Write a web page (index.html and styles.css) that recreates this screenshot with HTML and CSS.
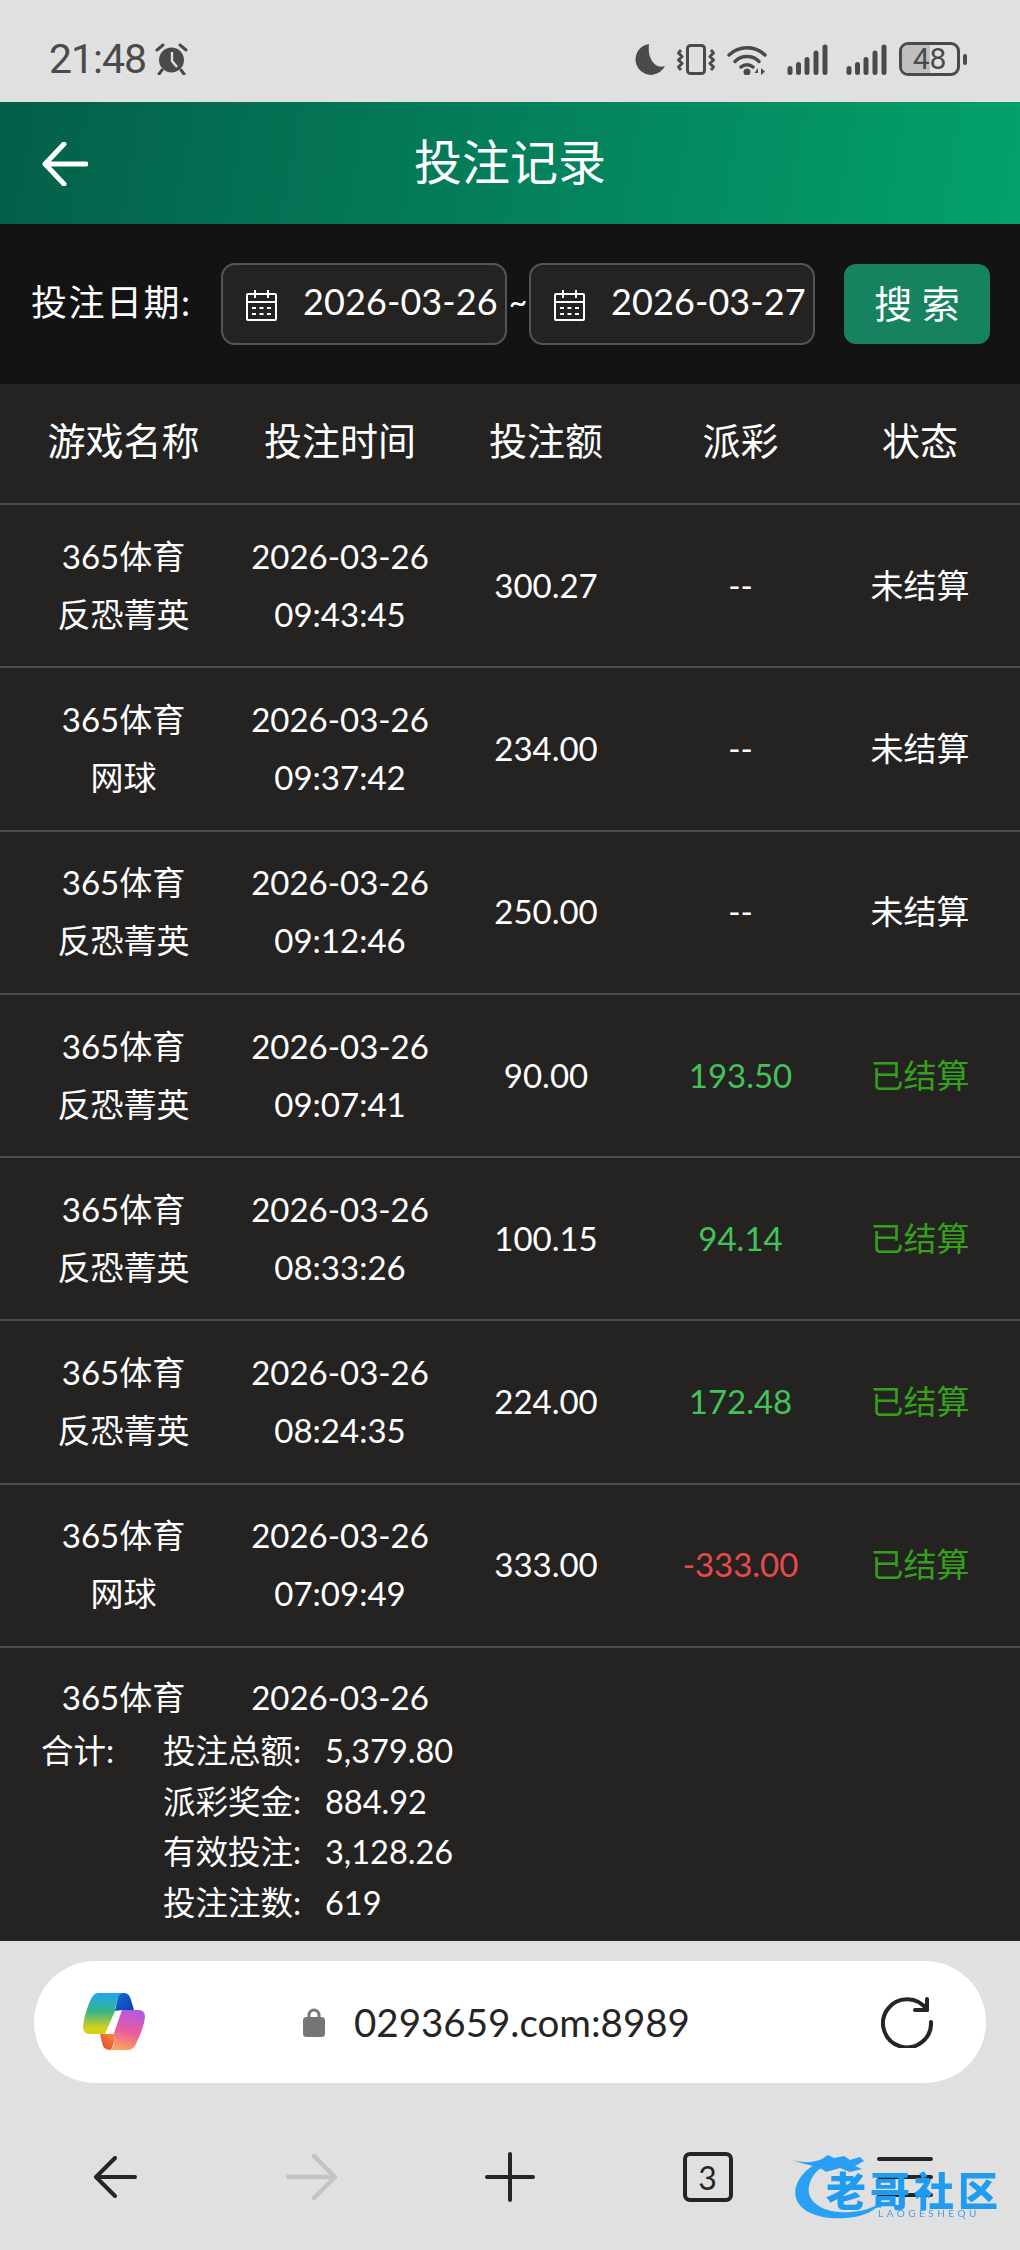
FILE: index.html
```html
<!DOCTYPE html>
<html>
<head>
    <meta charset="UTF-8">
    <meta name="viewport" content="width=device-width, initial-scale=1.0">
    <title>投注记录</title>
    <link rel="stylesheet" href="styles.css">
</head>
<body>
    <div class="status-bar">
        <div class="status-left">
            <span class="clock">21:48</span>
            <svg class="ico-alarm" viewBox="0 0 33 32" width="33" height="32">
                <circle cx="16.5" cy="17" r="12.5" fill="#4a4a4a"/>
                <path d="M17 9v9l5 6" fill="none" stroke="#e0e0e0" stroke-width="2.4"/>
                <path d="M2 7 8 2M31 7l-6-5M7 27l-3 4M26 27l3 4" stroke="#4a4a4a" stroke-width="3" stroke-linecap="round" fill="none"/>
            </svg>
        </div>
        <div class="status-right">
            <svg viewBox="0 0 30 31" width="30" height="31"><path d="M14 0A15.500 15.500 0 1 0 30 22C20 26 12 14 14 0Z" fill="#4a4a4a"/></svg>
            <svg class="gap-12" viewBox="0 0 38 31" width="38" height="31">
                <rect x="10.500" y="1.500" width="17" height="28" rx="3" fill="none" stroke="#4a4a4a" stroke-width="3"/>
                <path d="M4 6 1.500 9 5 12.500 1.500 16 5 19.500 1.500 23 4 26M34 6l2.500 3L33 12.500l3.500 3.500L33 19.500l3.500 3.500L34 26" fill="none" stroke="#4a4a4a" stroke-width="2.800"/>
            </svg>
            <svg class="gap-12" viewBox="0 0 41 31" width="41" height="31">
                <path d="M2 11a26 26 0 0 1 36 0M8 17.500a17 17 0 0 1 24 0M14 23a9 9 0 0 1 12 0" fill="none" stroke="#4a4a4a" stroke-width="3.400" stroke-linecap="round"/>
                <circle cx="20" cy="28" r="3.500" fill="#4a4a4a"/>
                <path d="M31 31v-7l-3.500 5h3.500ZM34 24v7l4-3.500Z" fill="#4a4a4a"/>
            </svg>
            <svg class="gap-19" viewBox="0 0 41 31" width="41" height="31">
                <g stroke="#4a4a4a" stroke-width="5" stroke-linecap="round"><path d="M3 24.500v4M11.500 20.500v8M20 15.500v13M29 9v19.500M38 3v25.500"/></g>
            </svg>
            <svg class="gap-18" viewBox="0 0 41 31" width="41" height="31">
                <g stroke="#4a4a4a" stroke-width="5" stroke-linecap="round"><path d="M3 24.500v4M11.500 20.500v8M20 15.500v13M29 9v19.500M38 3v25.500"/></g>
            </svg>
            <div class="battery"><span class="battery-fill"></span><span class="battery-num">48</span></div>
            <span class="battery-cap"></span>
        </div>
    </div>

    <div class="app-header">
        <svg class="header-back" viewBox="0 0 46 44" width="46" height="44">
            <path d="M44 22H4M22 2 3 22l19 20" fill="none" stroke="#fff" stroke-width="5" stroke-linecap="round" stroke-linejoin="round"/>
        </svg>
        <span>投注记录</span>
    </div>

    <div class="search-bar">
        <span class="search-label">投注日期:</span>
        <div class="date-box">
            <svg class="ico-cal" viewBox="0 0 33 33" width="33" height="33">
                <path d="M3 6h27a1 1 0 0 1 1 1v24a1 1 0 0 1-1 1H3a1 1 0 0 1-1-1V7a1 1 0 0 1 1-1ZM2 14h29M10 2v8M23 2v8M7 20h4M14.500 20h4M22 20h4M7 26h4M14.500 26h4M22 26h4" fill="none" stroke="#fff" stroke-width="2"/>
            </svg>
            <span class="date-text">2026-03-26</span>
        </div>
        <span class="tilde">~</span>
        <div class="date-box">
            <svg class="ico-cal" viewBox="0 0 33 33" width="33" height="33">
                <path d="M3 6h27a1 1 0 0 1 1 1v24a1 1 0 0 1-1 1H3a1 1 0 0 1-1-1V7a1 1 0 0 1 1-1ZM2 14h29M10 2v8M23 2v8M7 20h4M14.500 20h4M22 20h4M7 26h4M14.500 26h4M22 26h4" fill="none" stroke="#fff" stroke-width="2"/>
            </svg>
            <span class="date-text">2026-03-27</span>
        </div>
        <button class="search-btn">搜 索</button>
    </div>

    <div class="main">
        <div class="row row-head">
            <div>游戏名称</div><div>投注时间</div><div>投注额</div><div>派彩</div><div>状态</div>
        </div>
        <div class="row">
            <div>365体育<br>反恐菁英</div><div>2026-03-26<br>09:43:45</div><div>300.27</div><div>--</div><div>未结算</div>
        </div>
        <div class="row">
            <div>365体育<br>网球</div><div>2026-03-26<br>09:37:42</div><div>234.00</div><div>--</div><div>未结算</div>
        </div>
        <div class="row">
            <div>365体育<br>反恐菁英</div><div>2026-03-26<br>09:12:46</div><div>250.00</div><div>--</div><div>未结算</div>
        </div>
        <div class="row">
            <div>365体育<br>反恐菁英</div><div>2026-03-26<br>09:07:41</div><div>90.00</div><div class="win">193.50</div><div class="done">已结算</div>
        </div>
        <div class="row">
            <div>365体育<br>反恐菁英</div><div>2026-03-26<br>08:33:26</div><div>100.15</div><div class="win">94.14</div><div class="done">已结算</div>
        </div>
        <div class="row">
            <div>365体育<br>反恐菁英</div><div>2026-03-26<br>08:24:35</div><div>224.00</div><div class="win">172.48</div><div class="done">已结算</div>
        </div>
        <div class="row">
            <div>365体育<br>网球</div><div>2026-03-26<br>07:09:49</div><div>333.00</div><div class="lose">-333.00</div><div class="done">已结算</div>
        </div>
        <div class="row row-cut">
            <div>365体育</div><div>2026-03-26</div>
        </div>

        <div class="totals">
            <span class="totals-label">合计:</span>
            <div class="totals-list">
                <div class="totals-item"><span class="totals-name">投注总额:</span><span>5,379.80</span></div>
                <div class="totals-item"><span class="totals-name">派彩奖金:</span><span>884.92</span></div>
                <div class="totals-item"><span class="totals-name">有效投注:</span><span>3,128.26</span></div>
                <div class="totals-item"><span class="totals-name">投注注数:</span><span>619</span></div>
            </div>
        </div>
    </div>

    <div class="browser">
        <div class="url-bar">
            <svg class="ico-copilot" viewBox="0 0 62 58" width="62" height="58">
                <defs>
                    <linearGradient id="cpLeft" x1="0" y1="0" x2="0" y2="1">
                        <stop offset="0" stop-color="#1ea7f0"/>
                        <stop offset=".45" stop-color="#37b58a"/>
                        <stop offset=".85" stop-color="#d6cf1e"/>
                    </linearGradient>
                    <linearGradient id="cpRight" x1="0.500" y1="0" x2="0.300" y2="1">
                        <stop offset="0" stop-color="#b45be0"/>
                        <stop offset=".5" stop-color="#e85aa0"/>
                        <stop offset="1" stop-color="#fba45c"/>
                    </linearGradient>
                    <linearGradient id="cpTop" x1="0" y1="0" x2="1" y2="1">
                        <stop offset="0" stop-color="#1668d8"/>
                        <stop offset="1" stop-color="#0d3fb0"/>
                    </linearGradient>
                    <linearGradient id="cpBottom" x1="1" y1="0" x2="0" y2="1">
                        <stop offset="0" stop-color="#f98a40"/>
                        <stop offset="1" stop-color="#e0452f"/>
                    </linearGradient>
                </defs>
                <path d="M36 0H41C45 0 47 3 48 7L51 17H39L32 18 34 8Z" fill="url(#cpTop)"/>
                <path d="M17 41H32C31 49 30 56 27 57 22 57 20 54 19 50Z" fill="url(#cpBottom)"/>
                <path d="M15 0H40C35 1 33.500 8 32 18L22 41H6C2 41 0 38 0 34 1 24 5 12 8 6 10 2 12 0 15 0Z" fill="url(#cpLeft)"/>
                <path d="M39 17H56C60 17 62 20 62 24 61 34 56 44 53 51 51 55 48 57 45 57H27C31 56 32 48 31 40Z" fill="url(#cpRight)"/>
            </svg>
            <svg class="ico-lock" viewBox="0 0 22 29" width="22" height="29">
                <path d="M6 10V7a5 5 0 0 1 10 0v3" fill="none" stroke="#757575" stroke-width="3"/>
                <rect y="9" width="22" height="20" rx="3.500" fill="#757575"/>
            </svg>
            <span class="url-text">0293659.com:8989</span>
            <svg class="ico-reload" viewBox="0 0 52 52" width="52" height="52">
                <path d="M46 14A24 24 0 1 0 50 26" fill="none" stroke="#252525" stroke-width="4" stroke-linecap="round"/>
                <path d="M34 14H46V3" fill="none" stroke="#252525" stroke-width="4" stroke-linejoin="round" stroke-linecap="round"/>
            </svg>
        </div>

        <div class="nav">
            <div class="nav-item">
                <svg viewBox="0 0 44 42" width="44" height="42"><path d="M42 21H3M22 2 3 21l19 19" fill="none" stroke="#252525" stroke-width="4" stroke-linecap="round" stroke-linejoin="round"/></svg>
            </div>
            <div class="nav-item">
                <svg viewBox="0 0 52 46" width="52" height="46"><path d="M2 23h47M28 2l21 21-21 21" fill="none" stroke="#c3c3c3" stroke-width="4.500" stroke-linecap="round" stroke-linejoin="round"/></svg>
            </div>
            <div class="nav-item">
                <svg viewBox="0 0 50 50" width="50" height="50"><path d="M25 2v46M2 25h46" fill="none" stroke="#252525" stroke-width="4" stroke-linecap="round"/></svg>
            </div>
            <div class="nav-item"><span class="tab-count">3</span></div>
            <div class="nav-item">
                <svg viewBox="0 0 56 42" width="56" height="42"><path d="M2 3h52M2 21h52M2 39h52" fill="none" stroke="#252525" stroke-width="4" stroke-linecap="round"/></svg>
            </div>
        </div>

        <div class="watermark">
            <svg class="wm-dragon" viewBox="0 0 110 72" width="110" height="72">
                <path d="M38 8C12 16 0 34 4 48c4 14 24 22 50 20 18-1 30-8 36-16-12 8-26 11-42 10C28 61 14 50 17 36c2-10 10-20 24-24Z" fill="#2aa0f2"/>
                <path d="M0 10c12 3 20 3 30-1l6-4 6 3 10-2 6 4 10-3 4 4-9 5 7 3-12 3-10-4-14 4C28 16 14 15 0 10Z" fill="#2a9df5"/>
            </svg>
            <div class="wm-text">老哥社区</div>
            <div class="wm-sub">LAOGESHEQU</div>
        </div>
    </div>
</body>
</html>
```

FILE: styles.css
```css
body {
    margin: 0;
    width: 1020px;
    height: 2250px;
    overflow: hidden;
    position: relative;
    background-color: #e0e0e0;
    font-family: "Lato", "Noto Sans CJK SC", sans-serif;
    color: #fff;
}
svg {
    display: block;
    flex: none;
}

/* status bar */
.status-bar {
    height: 102px;
    box-sizing: border-box;
    padding: 0 53px 0 49px;
    display: flex;
    align-items: center;
    justify-content: space-between;
    color: #4a4a4a;
}
.status-left {
    display: flex;
    align-items: center;
    gap: 9px;
    margin-top: 16px;
}
.clock {
    font-family: "Roboto", sans-serif;
    font-size: 41px;
    line-height: 48px;
    letter-spacing: -1px;
}
.status-right {
    display: flex;
    align-items: center;
    margin-top: 16px;
}
.gap-12 {
    margin-left: 12px;
}
.gap-18 {
    margin-left: 18px;
}
.gap-19 {
    margin-left: 19px;
}
.battery {
    position: relative;
    width: 61px;
    height: 34px;
    margin-left: 12px;
    box-sizing: border-box;
    border: 3px solid #4a4a4a;
    border-radius: 9px;
    overflow: hidden;
    text-align: center;
}
.battery-fill {
    position: absolute;
    left: 0;
    top: 0;
    bottom: 0;
    width: 50%;
    background-color: #bfbfbf;
}
.battery-num {
    position: relative;
    display: block;
    font-family: "Roboto", sans-serif;
    font-size: 30px;
    line-height: 28px;
    color: #4a4a4a;
}
.battery-cap {
    width: 4px;
    height: 11px;
    margin-left: 3px;
    border-radius: 2px;
    background-color: #4a4a4a;
}

/* green title */
.app-header {
    position: relative;
    height: 122px;
    box-sizing: border-box;
    padding-bottom: 8px;
    display: flex;
    align-items: center;
    justify-content: center;
    font-size: 48px;
    background: linear-gradient(100deg, #035f49 0%, #047f5b 50%, #03a16c 100%);
}
.header-back {
    position: absolute;
    left: 42px;
    top: 40px;
}

/* date search */
.search-bar {
    height: 160px;
    box-sizing: border-box;
    padding-left: 31px;
    display: flex;
    align-items: center;
    background-color: #141314;
}
.search-label {
    width: 190px;
    padding-bottom: 8px;
    font-size: 36px;
    letter-spacing: 1.5px;
}
.date-box {
    width: 286px;
    height: 82px;
    box-sizing: border-box;
    padding-left: 22px;
    display: flex;
    align-items: center;
    gap: 25px;
    background-color: #242322;
    border: 2px solid #555;
    border-radius: 14px;
    font-size: 36px;
}
.date-text {
    padding-bottom: 6px;
    letter-spacing: .1px;
}
.tilde {
    width: 22px;
    padding-bottom: 6px;
    text-align: center;
    font-size: 32px;
}
.search-btn {
    width: 146px;
    height: 80px;
    margin-left: 29px;
    padding: 0 0 6px;
    border: none;
    border-radius: 12px;
    background-color: #178260;
    color: #fff;
    font-family: inherit;
    font-size: 38px;
}

/* records */
.main {
    height: 1557px;
    overflow: hidden;
    background-color: #242322;
}
.row {
    height: 163.3px;
    box-sizing: border-box;
    padding-bottom: 2px;
    display: grid;
    grid-template-columns: 247px 186px 226px 163px 196px;
    align-items: center;
    text-align: center;
    font-size: 33px;
    line-height: 58px;
    border-bottom: 2px solid #4d4d4c;
}
.row-head {
    height: 121px;
    padding-bottom: 8px;
    font-size: 38px;
}
.row-cut {
    height: 78px;
    padding-top: 20px;
    padding-bottom: 0;
    border-bottom: none;
}
.win {
    color: #44c25a;
}
.done {
    color: #35a01a;
}
.lose {
    color: #e84a4a;
}
.totals {
    padding-left: 41px;
    display: flex;
    font-size: 32.5px;
    line-height: 50.5px;
}
.totals-label {
    width: 122px;
}
.totals-name {
    width: 162px;
    display: inline-block;
}

/* browser chrome */
.browser {
    padding: 20px 16px 0;
}
.url-bar {
    height: 122px;
    margin: 0 18px;
    padding: 0 53px 0 49px;
    display: flex;
    align-items: center;
    background-color: #fff;
    border-radius: 61px;
    color: #252525;
}
.ico-lock {
    margin-left: 158px;
}
.url-text {
    flex: 1;
    margin-left: 29px;
    font-size: 38.5px;
}
.nav {
    height: 188px;
    display: grid;
    grid-template-columns: repeat(5, 1fr);
}
.nav-item {
    height: 188px;
    display: flex;
    align-items: center;
    justify-content: center;
}
.tab-count {
    width: 50px;
    height: 50px;
    box-sizing: border-box;
    border: 4px solid #252525;
    border-radius: 7px;
    display: flex;
    align-items: center;
    justify-content: center;
    color: #252525;
    font-size: 32px;
}
.watermark {
    position: absolute;
    left: 792px;
    top: 2150px;
    width: 210px;
    height: 74px;
    filter: blur(.5px);
}
.wm-dragon {
    position: absolute;
    left: 0;
    top: 0;
}
.wm-text {
    position: absolute;
    left: 34px;
    top: 26px;
    font-size: 40px;
    line-height: 30px;
    font-weight: 900;
    letter-spacing: 4px;
    white-space: nowrap;
    color: #1f9bf0;
}
.wm-sub {
    position: absolute;
    left: 86px;
    top: 58px;
    font-size: 10px;
    line-height: 10px;
    letter-spacing: 3.5px;
    color: #4a9fe0;
}
```
